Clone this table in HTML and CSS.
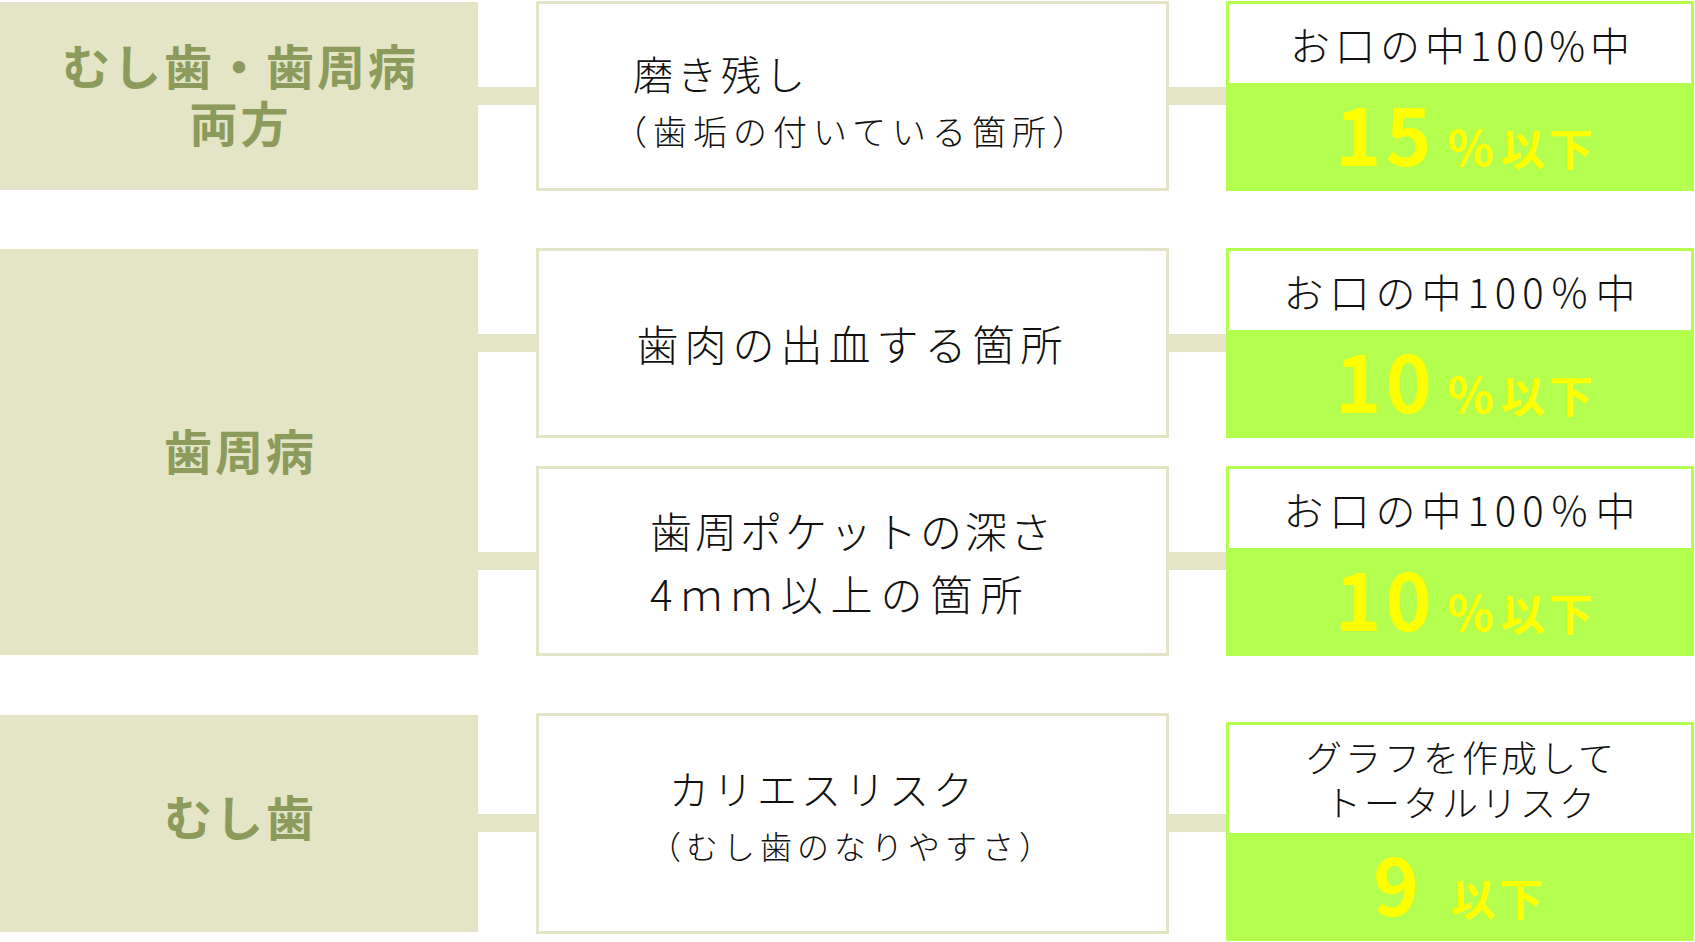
FILE: index.html
```html
<!DOCTYPE html>
<html lang="ja">
<head>
<meta charset="utf-8">
<title>リスク目標</title>
<link rel="stylesheet" href="styles.css">
</head>
<body>
<div class="chart">
  <section class="group g1">
    <div class="cat"><p>むし歯・歯周病</p><p>両方</p></div>
    <div class="items">
      <div class="item">
        <span class="link link-l"></span>
        <div class="desc d1">
          <div class="txt">
            <p class="big">磨き残し</p>
            <p class="small">（歯垢の付いている箇所）</p>
          </div>
        </div>
        <span class="link link-r"></span>
        <div class="result">
          <div class="cond">お口の中100%中</div>
          <div class="goal"><span class="num">15</span><span class="pct">%</span><span class="unit">以下</span></div>
        </div>
      </div>
    </div>
  </section>

  <section class="group g2">
    <div class="cat"><p>歯周病</p></div>
    <div class="items">
      <div class="item">
        <span class="link link-l"></span>
        <div class="desc">
          <div class="txt"><p class="one">歯肉の出血する箇所</p></div>
        </div>
        <span class="link link-r"></span>
        <div class="result">
          <div class="cond wide">お口の中100％中</div>
          <div class="goal"><span class="num">10</span><span class="pct">%</span><span class="unit">以下</span></div>
        </div>
      </div>
      <div class="item">
        <span class="link link-l"></span>
        <div class="desc">
          <div class="txt two">
            <p>歯周ポケットの深さ</p>
            <p class="second">4ｍｍ以上の箇所</p>
          </div>
        </div>
        <span class="link link-r"></span>
        <div class="result">
          <div class="cond wide">お口の中100％中</div>
          <div class="goal"><span class="num">10</span><span class="pct">%</span><span class="unit">以下</span></div>
        </div>
      </div>
    </div>
  </section>

  <section class="group g3">
    <div class="cat"><p>むし歯</p></div>
    <div class="items">
      <div class="item">
        <span class="link link-l"></span>
        <div class="desc d3">
          <div class="txt">
            <p class="big">カリエスリスク</p>
            <p class="small s3">（むし歯のなりやすさ）</p>
          </div>
        </div>
        <span class="link link-r"></span>
        <div class="result tall">
          <div class="cond two-line"><p>グラフを作成して</p><p>トータルリスク</p></div>
          <div class="goal goal-9"><span class="num nine">9</span><span class="unit">以下</span></div>
        </div>
      </div>
    </div>
  </section>
</div>
</body>
</html>
```

FILE: styles.css
```css
* { box-sizing: border-box; }
html, body { margin: 0; padding: 0; background: #ffffff; }
body {
  width: 1695px;
  height: 942px;
  overflow: hidden;
  font-family: "Noto Sans CJK JP", "Noto Sans", sans-serif;
  color: #111111;
}
p { margin: 0; }

.chart {
  display: flex;
  flex-direction: column;
  gap: 57px;
  padding-top: 1px;
}

.group {
  display: flex;
  align-items: stretch;
}

.cat {
  width: 478px;
  flex: 0 0 478px;
  background: #e4e4c7;
  color: #8c9b5b;
  font-weight: 700;
  font-size: 48px;
  letter-spacing: 3px;
  line-height: 57px;
  display: flex;
  flex-direction: column;
  align-items: center;
  justify-content: center;
  text-align: center;
  margin: 1px 0;
  padding-bottom: 6px;
}
.cat p { padding-left: 3px; }

.items {
  display: flex;
  flex-direction: column;
  gap: 28px;
}

.item {
  display: flex;
  align-items: center;
  height: 190px;
}

.link {
  display: block;
  height: 18px;
  background: #e4e4c7;
}
.link-l { width: 58px; }
.link-r { width: 57px; }

.desc {
  width: 633px;
  height: 190px;
  border: 3px solid #e4e4c7;
  background: #fff;
  display: flex;
  align-items: center;
  justify-content: center;
  font-weight: 300;
}
.d1 { padding-top: 12px; }
.d3 { padding-bottom: 14px; }

.txt { text-align: left; }
.big { font-size: 40px; letter-spacing: 4px; line-height: 57px; padding-left: 20px; }
.small { font-size: 34px; letter-spacing: 6px; line-height: 57px; }
.small.s3 { font-size: 32px; letter-spacing: 5px; }
.one { font-size: 42px; letter-spacing: 6px; line-height: 60px; }
.two p { font-size: 42px; letter-spacing: 3px; line-height: 63px; }
.two p.second { letter-spacing: 8px; }

.result {
  width: 468px;
  height: 190px;
  border: 3px solid #b4fe50;
  display: flex;
  flex-direction: column;
  background: #b4fe50;
}
.cond {
  height: 79px;
  flex: 0 0 79px;
  background: #fff;
  display: flex;
  align-items: center;
  justify-content: center;
  font-size: 40px;
  font-weight: 300;
  letter-spacing: 5px;
  line-height: 1;
  padding-left: 5px;
}
.cond.wide { letter-spacing: 6px; }

.goal {
  flex: 1;
  display: flex;
  align-items: baseline;
  justify-content: center;
  color: #ffff00;
  font-weight: 700;
  padding-left: 12px;
}
.num { font-size: 78px; line-height: 98px; letter-spacing: 4px; }
.pct { font-size: 48px; line-height: 98px; margin-left: 12px; margin-right: 7px; }
.unit { font-size: 44px; line-height: 98px; letter-spacing: 4px; }
.nine { margin-right: 28px; }
.goal-9 { padding-left: 0; }

/* group 3 offsets */
.g3 .item { height: 228px; align-items: flex-start; }
.g3 .cat { margin: 2px 0 0; height: 217px; align-self: flex-start; padding-bottom: 16px; }
.g3 .desc { height: 221px; }
.g3 .link { margin-top: 101px; }
.g3 .result { height: 219px; margin-top: 9px; }
.cond.two-line {
  height: 108px;
  flex: 0 0 108px;
  flex-direction: column;
  font-size: 36px;
  letter-spacing: 3px;
  line-height: 45px;
  padding-left: 3px;
}
```
